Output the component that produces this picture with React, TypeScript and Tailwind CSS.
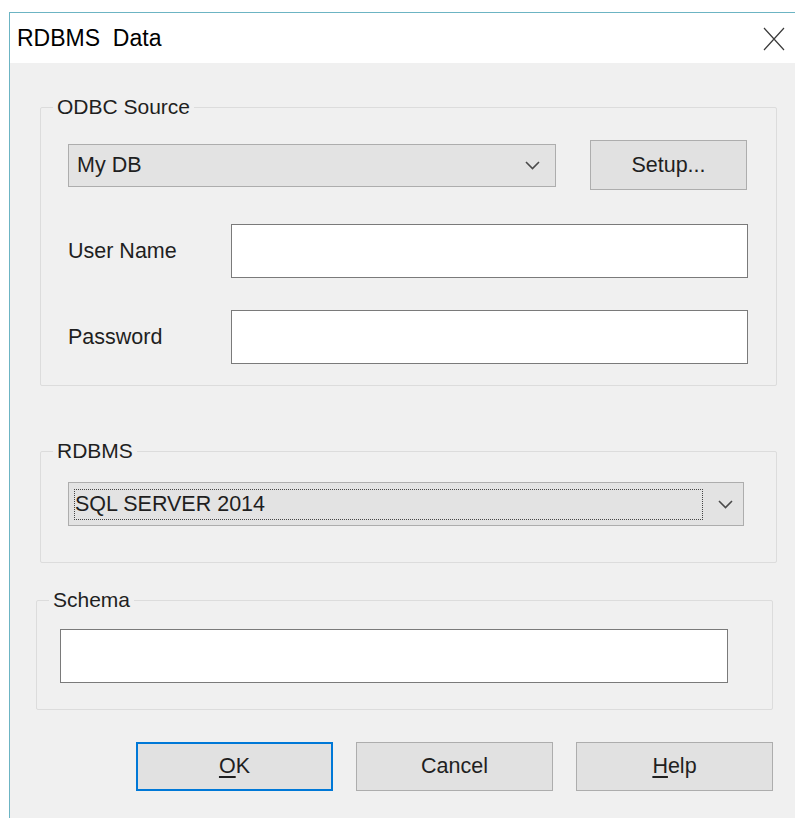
import type { ReactNode } from "react"

const GroupBox = ({
  title,
  className,
  children,
}: {
  title: string
  className: string
  children: ReactNode
}) => (
  <fieldset className={`border border-[#dcdcdc] rounded-[2px] ${className}`}>
    <legend className="ml-[12px] px-[4px] text-[21px] leading-[24px] text-[#1f1f1f]">
      {title}
    </legend>
    {children}
  </fieldset>
)

const TextBox = () => (
  <div className="h-[54px] flex-1 bg-white border border-[#7a7a7a]" />
)

// thin combo-box arrow
const Chevron = () => (
  <svg width="15" height="9" viewBox="0 0 15 9" className="shrink-0">
    <polyline points="1,1 7.5,7.5 14,1" fill="none" stroke="#4a4a4a" strokeWidth="1.6" />
  </svg>
)

const Button = ({
  children,
  primary,
}: {
  children: ReactNode
  primary?: boolean
}) => (
  <button
    className={
      primary
        ? "w-[197px] h-[49px] bg-[#e1e1e1] border-2 border-[#0078d7] text-[21.5px] text-[#1f1f1f]"
        : "w-[197px] h-[49px] bg-[#e1e1e1] border border-[#adadad] text-[21.5px] text-[#1f1f1f]"
    }
  >
    {children}
  </button>
)

export default function App() {
  return (
    <div className="min-h-screen bg-white pt-[12px] pl-[9px] font-['Liberation_Sans',Arial,sans-serif]">
      <div className="min-h-[806px] border-t border-l border-[#6cb4c3] bg-[#f0f0f0] flex flex-col">
        {/* title bar */}
        <div className="h-[50px] bg-white flex items-center justify-between pl-[7px] pr-[10px]">
          <span className="text-[23px] text-black whitespace-pre">RDBMS  Data</span>
          <svg width="22" height="24" viewBox="0 0 22 24" className="mt-[1px]">
            <path d="M1 1 L21 23 M21 1 L1 23" stroke="#3a3a3a" strokeWidth="1.2" fill="none" />
          </svg>
        </div>

        <GroupBox title="ODBC Source" className="mt-[32px] ml-[30px] w-[737px]">
          <div className="pt-[21px] pl-[27px] pr-[28px] pb-[21px] flex flex-col">
            <div className="flex items-center h-[50px]">
              <div className="w-[488px] h-[43px] bg-[#e3e3e3] border border-[#adadad] flex items-center justify-between pl-[8px] pr-[15px]">
                <span className="text-[21.5px] text-[#1f1f1f]">My DB</span>
                <Chevron />
              </div>
              <button className="ml-[34px] w-[157px] h-[50px] bg-[#e1e1e1] border border-[#adadad] text-[21.5px] text-[#1f1f1f]">
                Setup...
              </button>
            </div>
            <div className="mt-[34px] flex items-center">
              <span className="w-[163px] text-[21.5px] text-[#1f1f1f]">User Name</span>
              <TextBox />
            </div>
            <div className="mt-[32px] flex items-center">
              <span className="w-[163px] text-[21.5px] text-[#1f1f1f]">Password</span>
              <TextBox />
            </div>
          </div>
        </GroupBox>

        <GroupBox title="RDBMS" className="mt-[53px] ml-[30px] w-[737px]">
          <div className="pt-[19px] pl-[27px] pr-[32px] pb-[36px]">
            <div className="h-[44px] bg-[#e3e3e3] border border-[#adadad] flex items-center pl-[5px]">
              <div className="w-[629px] h-[31px] border border-dotted border-[#444] flex items-center">
                <span className="text-[21.5px] text-[#1f1f1f]">SQL SERVER 2014</span>
              </div>
              <div className="flex-1 flex justify-center pl-[4px]">
                <Chevron />
              </div>
            </div>
          </div>
        </GroupBox>

        <GroupBox title="Schema" className="mt-[25px] ml-[26px] w-[737px]">
          <div className="pt-[17px] pl-[23px] pr-[44px] pb-[26px] flex">
            <TextBox />
          </div>
        </GroupBox>

        <div className="mt-[32px] ml-[126px] flex gap-[23px]">
          <Button primary>
            <u className="underline-offset-[3px]">O</u>K
          </Button>
          <Button>Cancel</Button>
          <Button>
            <u className="underline-offset-[3px]">H</u>elp
          </Button>
        </div>
      </div>
    </div>
  )
}
